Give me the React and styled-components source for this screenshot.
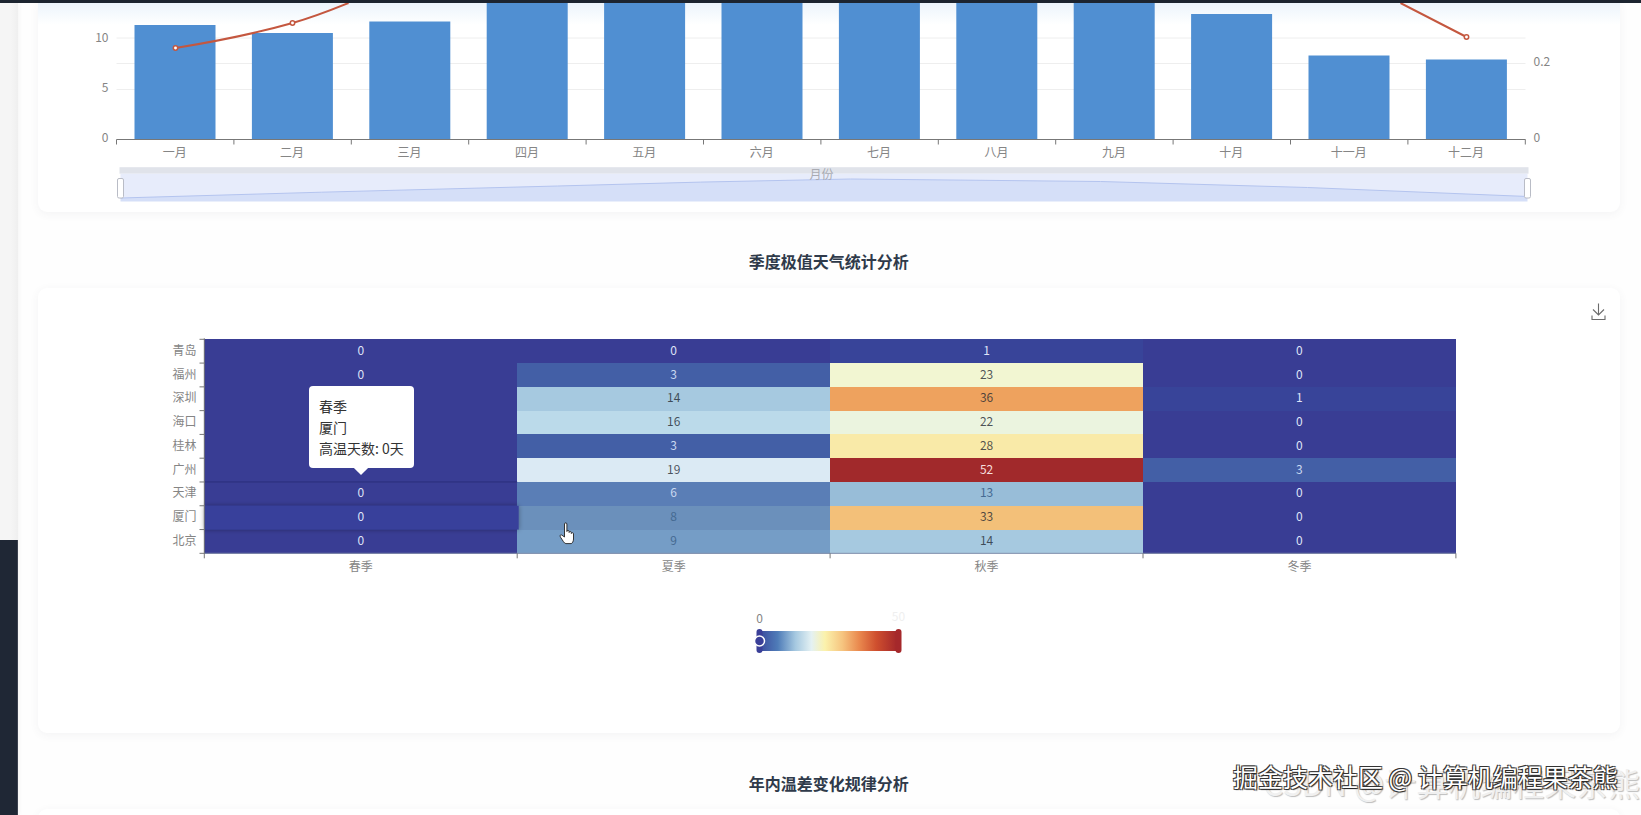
import React from "react";
import styled, { createGlobalStyle } from "styled-components";

const FONT = `"Noto Sans CJK SC", "Noto Sans", sans-serif`;

const GlobalStyle = createGlobalStyle`
  html, body { margin: 0; padding: 0; background: #fff; }
  body { font-family: ${FONT}; overflow: hidden; }
`;

const Page = styled.div`
  position: relative;
  width: 1641px;
  height: 815px;
  overflow: hidden;
  display: flex;
  flex-direction: column;
  background: #fefefe;
`;

const TopLine = styled.div`
  flex: 0 0 2.5px;
  background: #1d2530;
`;

const Body = styled.div`
  flex: 1;
  min-height: 0;
  display: flex;
`;

const Rail = styled.aside`
  flex: 0 0 18px;
  display: flex;
  flex-direction: column;
  box-shadow: 2px 0 4px rgba(0, 0, 0, 0.03);
`;

const RailLight = styled.div`
  flex: 0 0 537.5px;
  background: linear-gradient(90deg, #f5f5f5 60%, #efefef);
`;

const RailDark = styled.div`
  flex: 1;
  background: #1f2735;
  border-right: 1px solid #3c4250;
`;

const Main = styled.main`
  flex: 1;
  min-width: 0;
  display: flex;
  flex-direction: column;
  padding: 0 21px 0 19.5px;
`;

const Card = styled.section`
  position: relative;
  flex: 0 0 ${(p) => p.$height}px;
  background: #fff;
  border-radius: 9px;
  box-shadow: 0 2px 10px rgba(60, 70, 90, 0.06);
`;

// first card runs off the top of the view, a faint blue glow sits under the header there
const CutCard = styled(Card)`
  border-radius: 0 0 9px 9px;
  background: linear-gradient(180deg, rgba(228, 240, 251, 0.7), rgba(255, 255, 255, 0)) top / 100% 22px no-repeat, #fff;
`;

const SectionTitle = styled.h3`
  flex: 0 0 ${(p) => p.$height}px;
  margin: 0;
  padding-top: ${(p) => p.$top}px;
  box-sizing: border-box;
  text-align: center;
  font-size: 16px;
  line-height: 24px;
  font-weight: 700;
  color: #2f3a4a;
`;

const Chart = styled.svg`
  display: block;
  font-family: ${FONT};
`;

const Axis = styled.text`
  font-size: 12px;
  fill: ${(p) => p.$color || "#858585"};
`;

const CellValue = styled.text`
  font-size: 12px;
  fill: ${(p) => p.$ink};
`;

const Tooltip = styled.div`
  position: absolute;
  left: 271.5px;
  top: 98px;
  width: 105px;
  height: 82px;
  box-sizing: border-box;
  padding: 10px;
  background: #fff;
  border-radius: 4px;
  font-size: 14px;
  line-height: 21px;
  color: #333;
  white-space: nowrap;

  &::after {
    content: "";
    position: absolute;
    left: 47px;
    bottom: -5px;
    width: 10px;
    height: 10px;
    background: #fff;
    transform: rotate(45deg);
  }
`;

const Watermark = styled.div`
  position: absolute;
  white-space: nowrap;
  pointer-events: none;
`;

const CsdnMark = styled(Watermark)`
  left: 1263px;
  top: 762px;
  font-size: 32px;
  line-height: 40px;
  color: #f0f0f0;
  text-shadow: 1px 1px 1px #bdbdbd;
`;

const JuejinMark = styled(Watermark)`
  left: 1233px;
  top: 758px;
  font-size: 25px;
  line-height: 36px;
  color: #fff;
  text-shadow: -1px -1px 0 #333, 1px 1px 1px #222, 1px -1px 0 #555, -1px 1px 0 #555;
`;

const months = ["一月", "二月", "三月", "四月", "五月", "六月", "七月", "八月", "九月", "十月", "十一月", "十二月"];
const barTops = [24.5, 32.5, 21, 2.5, 2.5, 2.5, 2.5, 2.5, 2.5, 13.5, 55, 59];
const axisLeft = 116;
const axisStep = 117.4;
const axisY = 139;
const slider = "M120 197.5 L321 191.7 L557 185.5 L700 181.6 L850 178.5 L1100 181 L1307 187 L1527 196";

const TrendChart = () => (
  <Chart width="1582.5" height="209" viewBox="37.5 2.5 1582.5 209">
    {[37.5, 63, 89].map((y) => (
      <line key={y} x1={axisLeft} x2="1525" y1={y} y2={y} stroke="#eeeeee" />
    ))}
    {barTops.map((top, i) => (
      <rect
        key={months[i]}
        x={axisLeft + axisStep * i + 18}
        y={top}
        width="81"
        height={axisY - top}
        fill="#508fd2"
      />
    ))}
    <path
      d="M175 47.5 C215 41 255 33 292 22.5 C315 16 332 9 348 2.5 M1400 2.5 L1466 36.5"
      fill="none"
      stroke="#c4573f"
      strokeWidth="2"
    />
    {[[175, 47.5], [292, 22.5], [1466, 36.5]].map(([cx, cy]) => (
      <circle key={cx} cx={cx} cy={cy} r="2.2" fill="#fff" stroke="#c4573f" strokeWidth="1.5" />
    ))}
    <line x1={axisLeft} x2="1525" y1={axisY} y2={axisY} stroke="#777" />
    {Array.from({ length: 13 }, (_, i) => (
      <line
        key={i}
        x1={axisLeft + axisStep * i}
        x2={axisLeft + axisStep * i}
        y1={axisY}
        y2={axisY + 5}
        stroke="#777"
      />
    ))}
    {months.map((m, i) => (
      <Axis key={m} x={axisLeft + axisStep * (i + 0.5) - 0.5} y="156" textAnchor="middle">{m}</Axis>
    ))}
    <Axis x="108" y="41" textAnchor="end">10</Axis>
    <Axis x="108" y="91" textAnchor="end">5</Axis>
    <Axis x="108" y="141" textAnchor="end">0</Axis>
    <Axis x="1533" y="65">0.2</Axis>
    <Axis x="1533" y="141">0</Axis>

    <rect x="119" y="166.7" width="1409" height="6.5" fill="#e0e3ea" />
    <rect x="120" y="173.2" width="1407" height="24" fill="#e7ecfb" />
    <path d={`${slider} L1527 201 L120 201 Z`} fill="#d5dff8" />
    <path d={slider} fill="none" stroke="#b4c4ef" />
    <Axis x="821" y="178" textAnchor="middle" $color="#a9abb2">月份</Axis>
    <rect x="117" y="178" width="6" height="19.5" rx="1.5" fill="#fff" stroke="#b9bcc6" />
    <rect x="1524" y="178" width="6" height="19.5" rx="1.5" fill="#fff" stroke="#b9bcc6" />
  </Chart>
);

const cities = ["青岛", "福州", "深圳", "海口", "桂林", "广州", "天津", "厦门", "北京"];
const seasons = ["春季", "夏季", "秋季", "冬季"];
const days = [
  [0, 0, 1, 0],
  [0, 3, 23, 0],
  [0, 14, 36, 1],
  [0, 16, 22, 0],
  [0, 3, 28, 0],
  [0, 19, 52, 3],
  [0, 6, 13, 0],
  [0, 8, 33, 0],
  [0, 9, 14, 0],
];
const heat = {
  0: "#393d94", 1: "#384499", 3: "#435fa6", 6: "#5a7eb6", 8: "#6b90bb", 9: "#759dc6",
  13: "#98bdd8", 14: "#a6c9e0", 16: "#bbdaea", 19: "#dbeaf4", 22: "#ebf4df", 23: "#f2f6d2",
  28: "#f9eaa8", 33: "#f3c079", 36: "#eea25e", 52: "#a1292b",
};
const inkFor = (v) => {
  if (v === 52) return "#f6dede";
  if (v === 3 || v === 6) return "#c9d8f0";
  if (v < 3) return "#dfe4f8";
  if (v === 8 || v === 9 || v === 13) return "#456a92";
  return "rgba(35, 40, 50, 0.78)";
};
// the tooltip hides the labels of these cells
const hiddenZero = (row, col) => col === 0 && row >= 2 && row <= 5;

const gridX = 203.8;
const gridY = 339.3;
const cellW = 312.9;
const cellH = 23.78;
const gridB = gridY + cellH * 9;

const HeatChart = () => (
  <Chart width="1582.5" height="445" viewBox="37.5 288 1582.5 445">
    <defs>
      <linearGradient id="scale">
        <stop offset="0" stopColor="#3d50a0" />
        <stop offset="0.12" stopColor="#4f7cb8" />
        <stop offset="0.25" stopColor="#a5c8e0" />
        <stop offset="0.37" stopColor="#e4f1f3" />
        <stop offset="0.47" stopColor="#fbf2ac" />
        <stop offset="0.6" stopColor="#f6c47f" />
        <stop offset="0.72" stopColor="#ea8a4f" />
        <stop offset="0.85" stopColor="#cf4f2e" />
        <stop offset="1" stopColor="#a5282b" />
      </linearGradient>
      <filter id="lift" x="-5%" y="-40%" width="110%" height="180%">
        <feDropShadow dx="0" dy="0" stdDeviation="2.5" floodColor="#000" floodOpacity="0.35" />
      </filter>
    </defs>

    {days.map((row, r) =>
      row.map((v, c) => (
        <rect
          key={`${r}-${c}`}
          x={gridX + cellW * c}
          y={gridY + cellH * r}
          width={cellW + 0.5}
          height={cellH + 0.5}
          fill={heat[v]}
          shapeRendering="crispEdges"
        />
      ))
    )}
    <line x1={gridX} x2={gridX + cellW} y1={gridY + cellH * 6} y2={gridY + cellH * 6} stroke="#2b2f7c" />
    <rect
      x={gridX}
      y={gridY + cellH * 7}
      width={cellW + 1.5}
      height={cellH}
      fill="#373f9b"
      filter="url(#lift)"
    />
    <line x1={gridX} x2={gridX} y1={gridY - 1} y2={gridB} stroke="#777" />
    <line x1={gridX} x2={gridX + cellW * 4} y1={gridB} y2={gridB} stroke="#8a93ad" />
    {cities.map((city, r) => (
      <g key={city}>
        <line x1="199" x2={gridX} y1={gridY + cellH * r} y2={gridY + cellH * r} stroke="#777" />
        <Axis x="196" y={gridY + cellH * r + 15.5} textAnchor="end">{city}</Axis>
      </g>
    ))}
    <line x1="199" x2={gridX} y1={gridB} y2={gridB} stroke="#777" />
    {[0, 1, 2, 3, 4].map((i) => (
      <line key={i} x1={gridX + cellW * i} x2={gridX + cellW * i} y1={gridB} y2={gridB + 5} stroke="#777" />
    ))}
    {seasons.map((s, i) => (
      <Axis key={s} x={gridX + cellW * (i + 0.5)} y="570.5" textAnchor="middle">{s}</Axis>
    ))}
    {days.map((row, r) =>
      row.map((v, c) =>
        hiddenZero(r, c) ? null : (
          <CellValue
            key={`${r}-${c}`}
            x={gridX + cellW * (c + 0.5)}
            y={gridY + cellH * r + 15.5}
            textAnchor="middle"
            $ink={inkFor(v)}
          >
            {v}
          </CellValue>
        )
      )
    )}

    <rect x="761" y="631" width="135" height="20" fill="url(#scale)" />
    <rect x="756" y="629" width="6" height="24" rx="3" fill="#3a3f98" />
    <rect x="895" y="629" width="6" height="24" rx="3" fill="#a5282b" />
    <circle cx="759" cy="641" r="5" fill="#3a3f98" stroke="#fff" strokeWidth="1.5" />
    <Axis x="759" y="623" textAnchor="middle">0</Axis>
    <Axis x="898" y="621" textAnchor="middle" $color="#efefef">50</Axis>

    <path d="M1598 303.5 V315 M1592.5 309.5 L1598 315 L1603.5 309.5 M1591.5 315.5 V319.5 H1604.5 V315.5" fill="none" stroke="#6b6b6b" strokeWidth="1.1" />

    {/* mouse pointer caught in the recording */}
    <path
      d="M564 524 C564 522.5 566.4 522.5 566.4 524 V531.5 C566.4 530 568.6 530 568.6 531.5 V532.5 C568.6 531.2 570.8 531.2 570.8 532.5 V533.5 C570.8 532.4 573 532.4 573 533.7 V539 C573 541.5 571.6 543.6 570.6 543.6 H565.4 C563.6 543.6 562.4 540.5 560.4 537.8 C559 535.9 559.6 534.4 561.2 535 L564 537 Z"
      fill="#fff"
      stroke="#222"
      strokeWidth="0.9"
      strokeLinejoin="round"
    />
  </Chart>
);

const App = () => (
  <>
    <GlobalStyle />
    <Page>
      <TopLine />
      <Body>
        <Rail>
          <RailLight />
          <RailDark />
        </Rail>
        <Main>
          <CutCard $height={209}>
            <TrendChart />
          </CutCard>
          <SectionTitle $height={76.5} $top={37}>季度极值天气统计分析</SectionTitle>
          <Card $height={445}>
            <HeatChart />
            <Tooltip>
              春季<br />厦门<br />高温天数: 0天
            </Tooltip>
          </Card>
          <SectionTitle $height={76} $top={38}>年内温差变化规律分析</SectionTitle>
          <Card $height={40} />
        </Main>
      </Body>
      <CsdnMark>CSDN @计算机编程果茶熊</CsdnMark>
      <JuejinMark>掘金技术社区 @ 计算机编程果茶熊</JuejinMark>
    </Page>
  </>
);

export default App;
